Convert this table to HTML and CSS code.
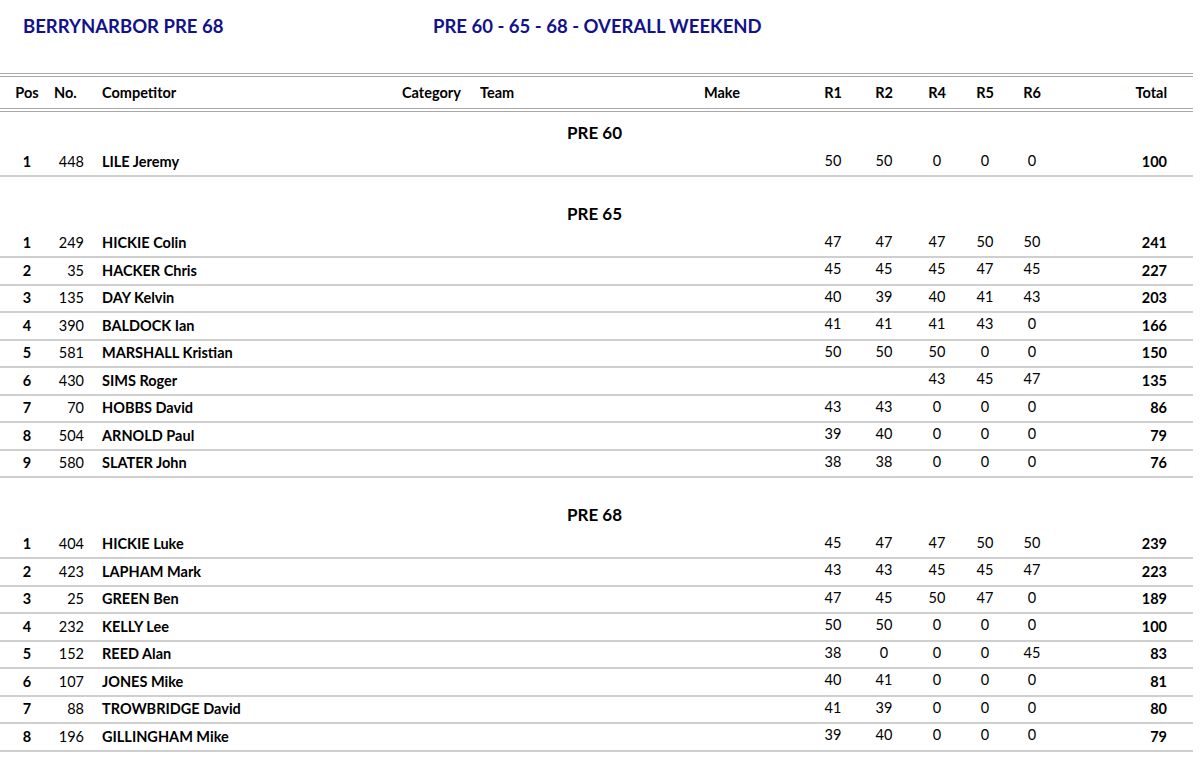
FILE: index.html
```html
<!DOCTYPE html>
<html>
<head>
<meta charset="utf-8">
<link rel="stylesheet" href="styles.css">
</head>
<body>
<div class="page">
  <div class="top">
    <div class="title">BERRYNARBOR PRE 68</div>
    <div class="title">PRE 60 - 65 - 68 - OVERALL WEEKEND</div>
  </div>
  <div class="row head">
    <div class="pos">Pos</div><div class="no">No.</div><div class="comp">Competitor</div><div class="cat">Category</div><div class="team">Team</div><div class="make">Make</div><div class="r">R1</div><div class="r">R2</div><div class="r">R4</div><div class="r">R5</div><div class="r">R6</div><div class="total">Total</div>
  </div>

  <div class="group first">
    <div class="gh">PRE 60</div>
    <div class="row"><div class="pos">1</div><div class="no">448</div><div class="comp">LILE Jeremy</div><div class="cat"></div><div class="team"></div><div class="make"></div><div class="r">50</div><div class="r">50</div><div class="r">0</div><div class="r">0</div><div class="r">0</div><div class="total">100</div></div>
  </div>

  <div class="group">
    <div class="gh">PRE 65</div>
    <div class="row"><div class="pos">1</div><div class="no">249</div><div class="comp">HICKIE Colin</div><div class="cat"></div><div class="team"></div><div class="make"></div><div class="r">47</div><div class="r">47</div><div class="r">47</div><div class="r">50</div><div class="r">50</div><div class="total">241</div></div>
    <div class="row"><div class="pos">2</div><div class="no">35</div><div class="comp">HACKER Chris</div><div class="cat"></div><div class="team"></div><div class="make"></div><div class="r">45</div><div class="r">45</div><div class="r">45</div><div class="r">47</div><div class="r">45</div><div class="total">227</div></div>
    <div class="row"><div class="pos">3</div><div class="no">135</div><div class="comp">DAY Kelvin</div><div class="cat"></div><div class="team"></div><div class="make"></div><div class="r">40</div><div class="r">39</div><div class="r">40</div><div class="r">41</div><div class="r">43</div><div class="total">203</div></div>
    <div class="row"><div class="pos">4</div><div class="no">390</div><div class="comp">BALDOCK Ian</div><div class="cat"></div><div class="team"></div><div class="make"></div><div class="r">41</div><div class="r">41</div><div class="r">41</div><div class="r">43</div><div class="r">0</div><div class="total">166</div></div>
    <div class="row"><div class="pos">5</div><div class="no">581</div><div class="comp">MARSHALL Kristian</div><div class="cat"></div><div class="team"></div><div class="make"></div><div class="r">50</div><div class="r">50</div><div class="r">50</div><div class="r">0</div><div class="r">0</div><div class="total">150</div></div>
    <div class="row"><div class="pos">6</div><div class="no">430</div><div class="comp">SIMS Roger</div><div class="cat"></div><div class="team"></div><div class="make"></div><div class="r"></div><div class="r"></div><div class="r">43</div><div class="r">45</div><div class="r">47</div><div class="total">135</div></div>
    <div class="row"><div class="pos">7</div><div class="no">70</div><div class="comp">HOBBS David</div><div class="cat"></div><div class="team"></div><div class="make"></div><div class="r">43</div><div class="r">43</div><div class="r">0</div><div class="r">0</div><div class="r">0</div><div class="total">86</div></div>
    <div class="row"><div class="pos">8</div><div class="no">504</div><div class="comp">ARNOLD Paul</div><div class="cat"></div><div class="team"></div><div class="make"></div><div class="r">39</div><div class="r">40</div><div class="r">0</div><div class="r">0</div><div class="r">0</div><div class="total">79</div></div>
    <div class="row"><div class="pos">9</div><div class="no">580</div><div class="comp">SLATER John</div><div class="cat"></div><div class="team"></div><div class="make"></div><div class="r">38</div><div class="r">38</div><div class="r">0</div><div class="r">0</div><div class="r">0</div><div class="total">76</div></div>
  </div>

  <div class="group">
    <div class="gh">PRE 68</div>
    <div class="row"><div class="pos">1</div><div class="no">404</div><div class="comp">HICKIE Luke</div><div class="cat"></div><div class="team"></div><div class="make"></div><div class="r">45</div><div class="r">47</div><div class="r">47</div><div class="r">50</div><div class="r">50</div><div class="total">239</div></div>
    <div class="row"><div class="pos">2</div><div class="no">423</div><div class="comp">LAPHAM Mark</div><div class="cat"></div><div class="team"></div><div class="make"></div><div class="r">43</div><div class="r">43</div><div class="r">45</div><div class="r">45</div><div class="r">47</div><div class="total">223</div></div>
    <div class="row"><div class="pos">3</div><div class="no">25</div><div class="comp">GREEN Ben</div><div class="cat"></div><div class="team"></div><div class="make"></div><div class="r">47</div><div class="r">45</div><div class="r">50</div><div class="r">47</div><div class="r">0</div><div class="total">189</div></div>
    <div class="row"><div class="pos">4</div><div class="no">232</div><div class="comp">KELLY Lee</div><div class="cat"></div><div class="team"></div><div class="make"></div><div class="r">50</div><div class="r">50</div><div class="r">0</div><div class="r">0</div><div class="r">0</div><div class="total">100</div></div>
    <div class="row"><div class="pos">5</div><div class="no">152</div><div class="comp">REED Alan</div><div class="cat"></div><div class="team"></div><div class="make"></div><div class="r">38</div><div class="r">0</div><div class="r">0</div><div class="r">0</div><div class="r">45</div><div class="total">83</div></div>
    <div class="row"><div class="pos">6</div><div class="no">107</div><div class="comp">JONES Mike</div><div class="cat"></div><div class="team"></div><div class="make"></div><div class="r">40</div><div class="r">41</div><div class="r">0</div><div class="r">0</div><div class="r">0</div><div class="total">81</div></div>
    <div class="row"><div class="pos">7</div><div class="no">88</div><div class="comp">TROWBRIDGE David</div><div class="cat"></div><div class="team"></div><div class="make"></div><div class="r">41</div><div class="r">39</div><div class="r">0</div><div class="r">0</div><div class="r">0</div><div class="total">80</div></div>
    <div class="row"><div class="pos">8</div><div class="no">196</div><div class="comp">GILLINGHAM Mike</div><div class="cat"></div><div class="team"></div><div class="make"></div><div class="r">39</div><div class="r">40</div><div class="r">0</div><div class="r">0</div><div class="r">0</div><div class="total">79</div></div>
  </div>
</div>
</body>
</html>
```

FILE: styles.css
```css
html, body {
  margin: 0;
  padding: 0;
  background: #ffffff;
}
body {
  font-family: "Lato", "Liberation Sans", sans-serif;
  font-size: 14.5px;
  color: #000000;
}
.page {
  width: 1193px;
  overflow: hidden;
}
.top {
  display: grid;
  grid-template-columns: 410px 1fr;
  padding: 14px 0 0 23px;
  height: 73px;
  box-sizing: border-box;
}
.title {
  font-size: 18.5px;
  line-height: 24px;
  font-weight: 700;
  color: #12128a;
}
.row {
  display: grid;
  grid-template-columns: 54px 36px 305px 78px 224px 111px 50px 52px 54px 42px 52px 135px;
  height: 27.5px;
  box-sizing: border-box;
  border-bottom: 2px solid #cfcfcf;
  align-items: center;
  line-height: 18px;
}
.row.head {
  height: 39px;
  border-top: 4px double #a9a9a9;
  border-bottom: 4px double #a9a9a9;
  font-weight: 700;
}
.row.head .no {
  text-align: left;
  padding: 0;
}
.row.head .r {
  padding-bottom: 0;
}
.pos {
  text-align: center;
  font-weight: 700;
}
.no {
  text-align: right;
  padding-right: 6px;
}
.comp {
  padding-left: 12px;
  font-weight: 700;
  white-space: nowrap;
}
.cat, .team, .make {
  padding-left: 7px;
}
.r {
  text-align: center;
  padding-bottom: 3px;
}
.total {
  text-align: right;
  padding-right: 26px;
  font-weight: 700;
}
.group {
  padding-top: 16px;
}
.group.first {
  padding-top: 0;
}
.gh {
  height: 37.5px;
  box-sizing: border-box;
  padding-top: 12px;
  line-height: 18px;
  font-size: 17px;
  font-weight: 700;
  text-align: center;
  padding-right: 4px;
}
```
